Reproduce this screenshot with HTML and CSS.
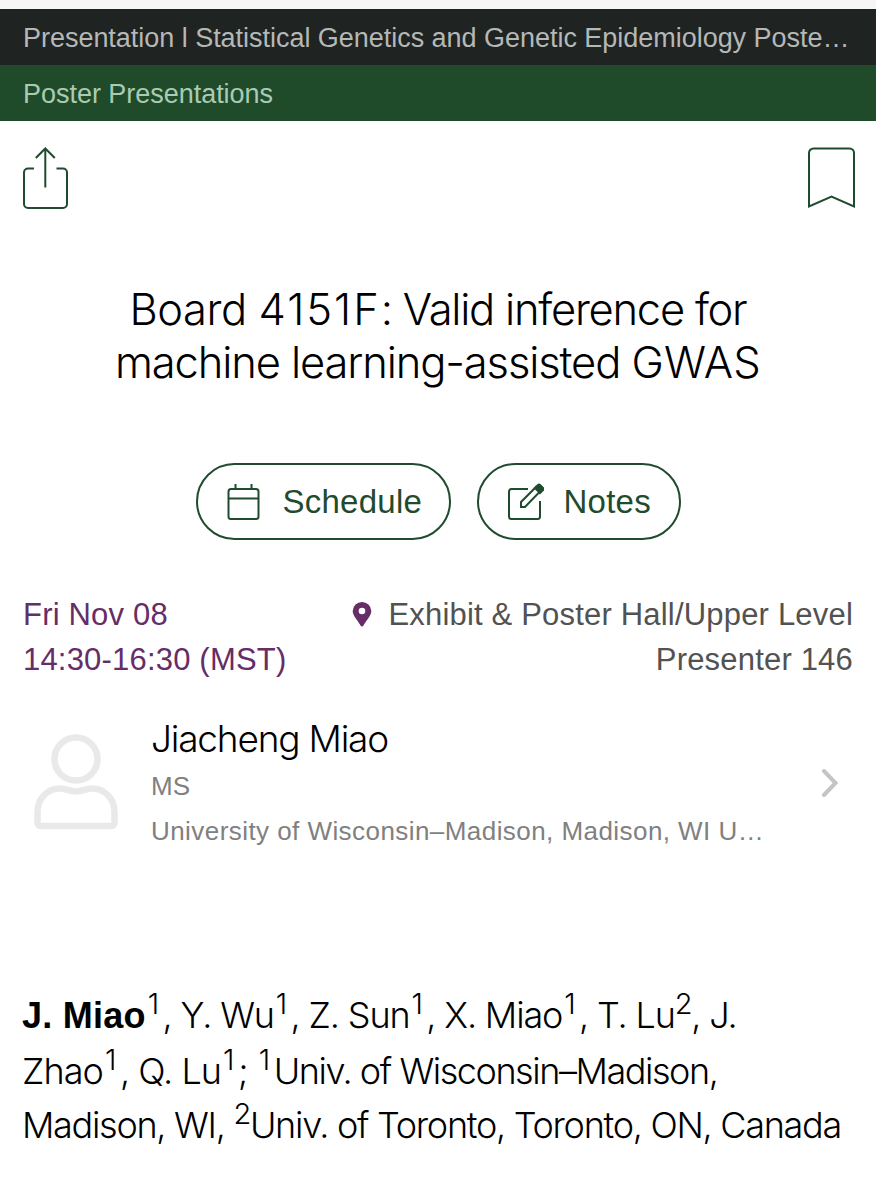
FILE: index.html
```html
<!DOCTYPE html>
<html lang="en">
<head>
    <meta charset="UTF-8">
    <meta name="viewport" content="width=device-width, initial-scale=1.0">
    <title>Board 4151F</title>
    <link rel="stylesheet" href="styles.css">
</head>
<body>
    <header>
        <div class="bar session">Presentation l Statistical Genetics and Genetic Epidemiology Poste…</div>
        <div class="bar track">Poster Presentations</div>
    </header>

    <main>
        <div class="toolbar">
            <svg class="share" viewBox="0 0 46 62" width="46" height="62">
                <path d="M12 21.5H6a4 4 0 0 0-4 4v31.500a4 4 0 0 0 4 4h35a4 4 0 0 0 4-4V25.500a4 4 0 0 0-4-4h-6.500M23.300 40.500V2M13.800 11l9.500-9.500 9.500 9.500"/>
            </svg>
            <svg class="bookmark" viewBox="0 0 48 62" width="48" height="62">
                <path d="M2 59.500V6a4.500 4.500 0 0 1 4.500-4.500h36A4.500 4.500 0 0 1 47 6v53.500L24.500 49.500z"/>
            </svg>
        </div>

        <h1><span class="title-top"><span class="board">Board </span><span class="number">4151F</span>: Valid inference for</span><br><span class="title-bottom">machine learning-assisted <span class="acronym">GWAS</span></span></h1>

        <div class="actions">
            <button class="schedule">
                <svg viewBox="0 0 38 38" width="38" height="38">
                    <rect x="3.500" y="6" width="30" height="30" rx="2.500"/>
                    <path d="M3.500 15.500h30M10.500 1v5M26.500 1v5"/>
                </svg>
                <span>Schedule</span>
            </button>
            <button class="notes">
                <svg viewBox="0 0 38 38" width="38" height="38">
                    <path d="M22 6H5.500A2.500 2.500 0 0 0 3 8.500v25A2.500 2.500 0 0 0 5.500 36h26a2.500 2.500 0 0 0 2.500-2.500V18"/>
                    <path d="M15 24v-5L30 4l4 4.500L19 24z"/>
                    <path class="tip" d="M29 5l3-3q1-1 2 0l3 3q1 1 0 2l-3 3z"/>
                </svg>
                <span>Notes</span>
            </button>
        </div>

        <div class="details">
            <div class="when">
                <span class="day">Fri Nov 08</span><br><span class="time">14:30-16:30 (MST)</span>
            </div>
            <div class="where">
                <svg viewBox="0 0 20 26" width="20" height="26">
                    <path fill-rule="evenodd" d="M10 1a9.300 9.300 0 0 0-9.300 9c0 5 4.800 9 7.800 14.500q1.500 2 3 0C14.500 19 19.300 15 19.300 10a9.300 9.300 0 0 0-9.300-9zm0 5.700a3.300 3.300 0 1 1 0 6.600 3.300 3.300 0 0 1 0-6.600z"/>
                </svg>
                <span class="hall">Exhibit &amp; Poster Hall/Upper Level</span><br><span class="booth">Presenter 146</span>
            </div>
        </div>

        <div class="presenter">
            <svg class="avatar" viewBox="0 0 84 98" width="84" height="98">
                <circle cx="42" cy="27" r="21.500"/>
                <path d="M3.500 91V80C3.500 66 14 56.500 26 56.500c6 0 9 3 16 3s10-3 16-3C70 56.500 80.500 66 80.500 80v11a3 3 0 0 1-3 3h-71a3 3 0 0 1-3-3z"/>
            </svg>
            <div class="person">
                <div class="name">Jiacheng Miao</div>
                <div class="degree">MS</div>
                <div class="org">University of Wisconsin–Madison, Madison, WI U…</div>
            </div>
            <svg class="chevron" viewBox="0 0 18 28" width="18" height="28">
                <path d="M3 2l11.500 12L3 26"/>
            </svg>
        </div>

        <p class="authors">
            <span class="line one"><b>J. Miao</b><sup>1</sup>, Y. Wu<sup>1</sup>, Z. Sun<sup>1</sup>, X. Miao<sup>1</sup>, T. Lu<sup class="wide">2</sup>, J.</span>
            <span class="line two">Zhao<sup>1</sup>, Q. Lu<sup>1</sup>; <sup>1</sup><span class="tight">Univ. of Wisconsin–Madison,</span></span>
            <span class="line three">Madison, WI, <sup class="wide">2</sup>Univ. of Toronto, Toronto, ON, Canada</span>
        </p>
    </main>
</body>
</html>
```
FILE: styles.css
```css
* {
    box-sizing: border-box;
}

body {
    margin: 0;
    background: #ffffff;
    color: #000000;
    font-family: "Liberation Sans", Arial, sans-serif;
}

header {
    border-top: 9px solid #f6f6f6;
}

.bar {
    height: 56px;
    padding: 0 23px;
    font-size: 27px;
    line-height: 58px;
    letter-spacing: -0.030px;
    white-space: nowrap;
}

.session {
    background: #1f2322;
    color: #b5b8b7;
}

.track {
    background: #1f4b2b;
    color: #a9cbb3;
}

svg {
    display: block;
    fill: none;
    stroke: #1f4b2e;
    stroke-width: 2;
}

.toolbar {
    display: flex;
    justify-content: space-between;
    padding: 26px 21px 0 22px;
}

h1 {
    margin: 74px 0 0;
    text-align: center;
    font-family: Inter, sans-serif;
    font-size: 43.500px;
    font-weight: 300;
    line-height: 52.500px;
}

.title-top {
    letter-spacing: -1.250px;
}

.title-top .board {
    letter-spacing: -0.450px;
}

.title-top .number {
    letter-spacing: 2px;
}

.title-bottom {
    letter-spacing: -1.120px;
}

.title-bottom .acronym {
    letter-spacing: 0.250px;
}

.actions {
    display: flex;
    justify-content: center;
    gap: 26px;
    margin-top: 75px;
}

button {
    display: flex;
    align-items: center;
    height: 77px;
    padding: 0 0 0 27px;
    border: 2px solid #1f4b2e;
    border-radius: 39px;
    background: #ffffff;
    color: #1f4b2e;
    font-family: inherit;
    font-size: 33px;
    letter-spacing: 0.250px;
    white-space: nowrap;
}

button svg {
    margin-right: 20px;
}

.schedule {
    width: 255px;
}

.notes {
    width: 204px;
}

.tip {
    fill: #1f4b2e;
}

.details {
    display: flex;
    justify-content: space-between;
    padding: 0 23px;
    margin-top: 52px;
    font-size: 31px;
    line-height: 45px;
    letter-spacing: 0.190px;
}

.when {
    color: #662d66;
}

.where {
    color: #525252;
    text-align: right;
}

.where svg {
    display: inline-block;
    margin-right: 8px;
    fill: #662d66;
    stroke: none;
    vertical-align: -2px;
}

.presenter {
    display: flex;
    align-items: flex-start;
    padding: 0 37px 0 34px;
    margin-top: 32px;
}

.avatar {
    margin-top: 18px;
    stroke: #e9e9e9;
    stroke-width: 6.500;
}

.person {
    margin-left: 33px;
    color: #808080;
    font-size: 26px;
    line-height: 45px;
}

.name {
    color: #000000;
    font-family: Inter, sans-serif;
    font-size: 37px;
    font-weight: 300;
    line-height: 50px;
    letter-spacing: -1.200px;
}

.org {
    letter-spacing: 0.440px;
    white-space: nowrap;
}

.chevron {
    margin: 55px 0 0 auto;
    stroke: #c4c4c4;
    stroke-width: 4;
    stroke-linecap: round;
}

.authors {
    margin: 134px 0 0 22px;
    font-family: Inter, sans-serif;
    font-size: 36px;
    font-weight: 300;
    line-height: 54.700px;
    letter-spacing: -1.150px;
}

.authors b {
    font-family: "Liberation Sans", Arial, sans-serif;
    font-weight: 700;
    letter-spacing: 0.250px;
}

.authors sup {
    margin: 0 4.500px 0 2px;
    font-size: 29px;
    line-height: 0;
    vertical-align: 14px;
}

.authors sup.wide {
    margin: 0;
}

.line {
    display: block;
    white-space: nowrap;
}

.two {
    letter-spacing: -0.950px;
}

.tight {
    letter-spacing: -1.450px;
}

.three {
    letter-spacing: -1.290px;
}
```
